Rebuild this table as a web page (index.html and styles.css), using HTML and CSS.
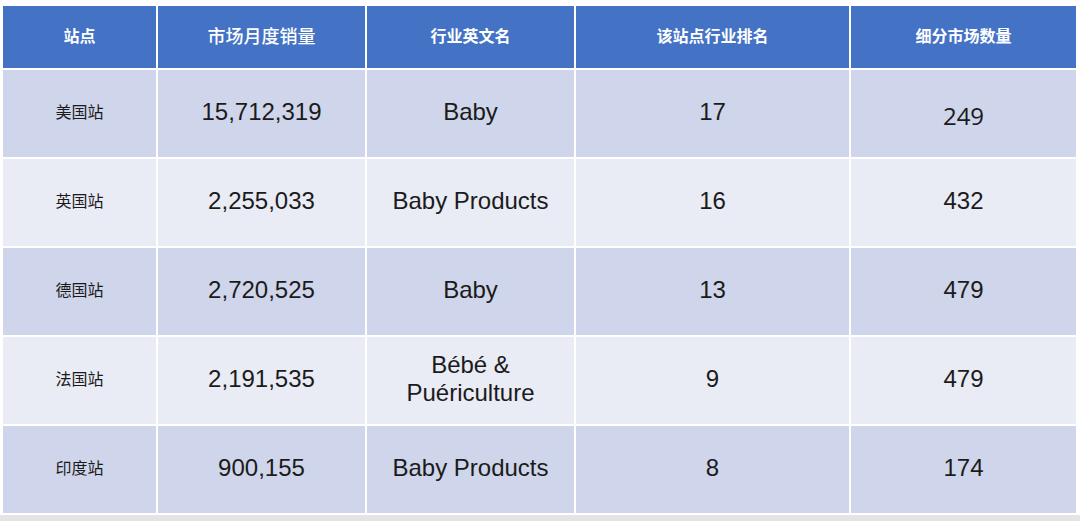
FILE: index.html
```html
<!DOCTYPE html>
<html lang="zh">
<head>
<meta charset="utf-8">
<title>站点数据</title>
<link rel="stylesheet" href="styles.css">
</head>
<body>
<main class="page">
  <div class="table">
    <div class="cell head">站点</div>
    <div class="cell head head-lg">市场月度销量</div>
    <div class="cell head">行业英文名</div>
    <div class="cell head">该站点行业排名</div>
    <div class="cell head">细分市场数量</div>

    <div class="cell odd zh">美国站</div>
    <div class="cell odd num">15,712,319</div>
    <div class="cell odd num">Baby</div>
    <div class="cell odd num">17</div>
    <div class="cell odd num alt">249</div>

    <div class="cell even zh">英国站</div>
    <div class="cell even num">2,255,033</div>
    <div class="cell even num">Baby Products</div>
    <div class="cell even num">16</div>
    <div class="cell even num">432</div>

    <div class="cell odd zh">德国站</div>
    <div class="cell odd num">2,720,525</div>
    <div class="cell odd num">Baby</div>
    <div class="cell odd num">13</div>
    <div class="cell odd num">479</div>

    <div class="cell even zh">法国站</div>
    <div class="cell even num">2,191,535</div>
    <div class="cell even num two">Bébé &amp;<br>Puériculture</div>
    <div class="cell even num">9</div>
    <div class="cell even num">479</div>

    <div class="cell odd zh">印度站</div>
    <div class="cell odd num">900,155</div>
    <div class="cell odd num">Baby Products</div>
    <div class="cell odd num">8</div>
    <div class="cell odd num">174</div>
  </div>
</main>
</body>
</html>
```
FILE: styles.css
```css
html {
  background: #e4e4e4;
}
body {
  margin: 0;
  width: 1080px;
  height: 521px;
  overflow: hidden;
}
.page {
  background: #ffffff;
  height: 515px;
  padding: 6px 0 0 3px;
  box-sizing: border-box;
}
.table {
  display: grid;
  grid-template-columns: 153px 207px 207px 273px 225px;
  grid-template-rows: 62px repeat(5, 87px);
  gap: 2px;
  background: #ffffff;
}
.cell {
  display: flex;
  align-items: center;
  justify-content: center;
  text-align: center;
  color: #1b1b1b;
}
.head {
  background: #4472c4;
  color: #ffffff;
  font-family: "Noto Sans CJK SC", "Noto Sans", sans-serif;
  font-weight: 700;
  font-size: 16px;
  padding-bottom: 4px;
}
.head-lg {
  font-size: 18px;
  font-weight: 500;
}
.odd {
  background: #cfd5ea;
}
.even {
  background: #e9ebf5;
}
.zh {
  font-family: "Noto Sans CJK SC", sans-serif;
  font-size: 16px;
  padding-bottom: 5px;
}
.num {
  font-family: "Liberation Sans", Arial, sans-serif;
  font-size: 24px;
  padding-bottom: 4px;
}
.two {
  line-height: 28px;
}
.alt {
  font-family: "Open Sans", "Noto Sans", sans-serif;
  font-size: 24px;
  padding-top: 4px;
  padding-bottom: 0;
}
```
